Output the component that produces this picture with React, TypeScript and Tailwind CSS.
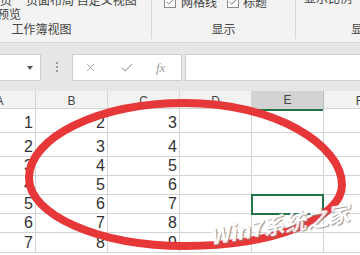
import { Check, X } from "lucide-react";

const CJK = "font-['Microsoft_YaHei','Noto_Sans_CJK_SC',sans-serif]";

const COLS = ["A", "B", "C", "D", "E", "F"];
// row heights in px, first two rows are taller
const ROWS: { h: string; vals: number[] }[] = [
  { h: "h-[24px]", vals: [1, 2, 3] },
  { h: "h-[24px]", vals: [2, 3, 4] },
  { h: "h-[19px]", vals: [3, 4, 5] },
  { h: "h-[19px]", vals: [4, 5, 6] },
  { h: "h-[19px]", vals: [5, 6, 7] },
  { h: "h-[19px]", vals: [6, 7, 8] },
  { h: "h-[20px]", vals: [7, 8, 9] }
];

function Box() {
  return (
    <span className="flex h-[12px] w-[12px] items-center justify-center border border-[#8a8a8a] bg-white">
      <Check className="h-[10px] w-[10px] text-[#555]" strokeWidth={2} />
    </span>
  );
}

function Ribbon() {
  return (
    <div className="flex h-[43px] border-b border-[#d9d9d9] bg-[#f3f3f3] text-[12px] leading-[12px] text-[#444]">
      {/* 工作簿视图 */}
      <div className="-ml-[68px] flex w-[220px] shrink-0 flex-col border-r border-[#d6d6d6] mb-[3px]">
        <div className="-mt-[6px] flex gap-[14px] pl-[68px]">
          <span className={CJK}>页</span>
          <span className={CJK}>页面布局 自定义视图</span>
        </div>
        <span className={`${CJK} ml-[65px] mt-[2px]`}>预览</span>
        <span className={`${CJK} mt-auto mb-[4px] text-center`}>工作簿视图</span>
      </div>
      {/* 显示 */}
      <div className="flex w-[144px] shrink-0 flex-col border-r border-[#d6d6d6] mb-[3px]">
        <div className="-mt-[4px] flex items-center pl-[12px]">
          <Box />
          <span className={`${CJK} ml-[5px]`}>网格线</span>
          <span className="ml-[10px]">
            <Box />
          </span>
          <span className={`${CJK} ml-[4px]`}>标题</span>
        </div>
        <span className={`${CJK} mt-auto mb-[4px] text-center`}>显示</span>
      </div>
      <div className="flex flex-1 flex-col pb-[7px]">
        <span className={`${CJK} -mt-[8px] ml-[8px]`}>显示比例</span>
        <span className={`${CJK} mt-auto ml-[55px]`}>显</span>
      </div>
    </div>
  );
}

function FormulaBar() {
  return (
    <div className="flex h-[48px] items-start bg-[#e6e6e6] pt-[11px]">
      <div className="flex h-[27px] w-[41px] items-center justify-end border border-l-0 border-[#cfcfcf] bg-white pr-[7px]">
        <span className="h-0 w-0 border-x-[3px] border-t-[4px] border-x-transparent border-t-[#555]" />
      </div>
      <div className="flex w-[31px] flex-col items-center gap-[2px] pt-[8px]">
        <span className="h-[2px] w-[2px] bg-[#9a9a9a]" />
        <span className="h-[2px] w-[2px] bg-[#9a9a9a]" />
        <span className="h-[2px] w-[2px] bg-[#9a9a9a]" />
      </div>
      <div className="flex h-[27px] w-[110px] items-center border border-[#cfcfcf] bg-white pl-[11px] text-[#a0a0a0]">
        <X className="h-[13px] w-[13px]" strokeWidth={1.6} />
        <Check className="ml-[23px] h-[14px] w-[14px]" strokeWidth={1.8} />
        <span className="ml-[22px] font-['Liberation_Serif',serif] text-[13px] italic leading-none">
          fx
        </span>
      </div>
      <div className="ml-[3px] h-[27px] flex-1 border border-r-0 border-[#cfcfcf] bg-white" />
    </div>
  );
}

function Sheet() {
  return (
    <div className="-ml-[36px] font-['Liberation_Sans',sans-serif]">
      <div className="grid h-[18px] grid-cols-[72px_72px_72px_72px_72px_72px] border-b border-[#d4d4d4] bg-[#f2f2f2] text-[12px] text-[#444]">
        {COLS.map((c) => (
          <div
            key={c}
            className={
              c === "E"
                ? "flex items-center justify-center border-r border-b-2 border-r-[#bdbdbd] border-b-[#217346] bg-[#d3d3d3]"
                : "flex items-center justify-center border-r border-[#d4d4d4]"
            }
          >
            {c}
          </div>
        ))}
      </div>
      {ROWS.map((r, ri) => (
        <div
          key={ri}
          className={`grid ${r.h} grid-cols-[72px_72px_72px_72px_72px_72px] border-b border-[#d4d4d4] bg-white text-[16px] leading-[16px] text-[#333]`}
        >
          {COLS.map((c, ci) => (
            <div
              key={c}
              className={
                ri === 4 && c === "E"
                  ? "relative border-r border-[#d4d4d4]"
                  : "flex items-end justify-end border-r border-[#d4d4d4] pr-[2px] pb-[1px]"
              }
            >
              {ci < 3 ? r.vals[ci] : null}
              {ri === 4 && c === "E" ? (
                <span className="absolute -top-[1px] -left-[1px] h-[21px] w-[73px] border-2 border-[#217346]" />
              ) : null}
            </div>
          ))}
        </div>
      ))}
    </div>
  );
}

export default function App() {
  return (
    <div className="relative h-[255px] w-[360px] overflow-hidden bg-white">
      <Ribbon />
      <FormulaBar />
      <Sheet />
      <svg
        className="pointer-events-none absolute inset-0"
        width="360"
        height="255"
        viewBox="0 0 360 255"
      >
        <path
          d="M29 178 C29 137 99 103 185 103 C275 103 342 145 342 185 C342 218 275 246 185 246 C99 246 29 215 29 178 Z"
          fill="none"
          stroke="#e63838"
          strokeWidth="8"
          strokeLinecap="round"
        />
      </svg>
      <span
        className={`${CJK} pointer-events-none absolute left-[208px] top-[212px] -rotate-[10deg] text-[22px] font-bold italic leading-none text-white opacity-90 [text-shadow:1px_1px_1px_#888]`}
      >
        Win7系统之家
      </span>
    </div>
  );
}
